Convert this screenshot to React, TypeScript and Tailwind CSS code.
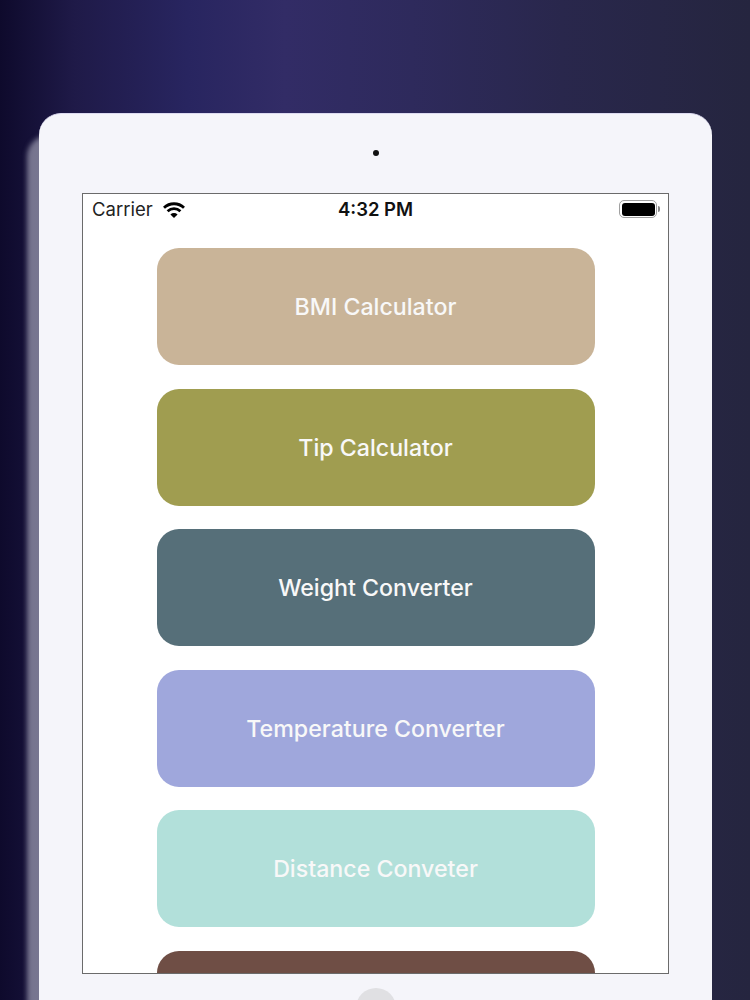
const tools = [
  { name: "BMI Calculator", color: "bg-[#c9b498]" },
  { name: "Tip Calculator", color: "bg-[#a09d50]" },
  { name: "Weight Converter", color: "bg-[#566f79]" },
  { name: "Temperature Converter", color: "bg-[#9fa7dc]" },
  { name: "Distance Conveter", color: "bg-[#b2e0da]" },
  { name: "", color: "bg-[#6f4e45]" },
];

const WifiIcon = () => (
  <svg width="22" height="16" viewBox="0 0 22 16" fill="none" stroke="#000" strokeWidth="2.8">
    <path d="M1 5.8C6.6 0.4 15.4 0.4 21 5.8" />
    <path d="M4.6 9.3C8.3 5.8 13.7 5.8 17.4 9.3" />
    <path d="M11 16L7.4 12.4C9.5 10.6 12.5 10.6 14.6 12.4Z" fill="#000" stroke="none" />
  </svg>
);

const BatteryIcon = () => (
  <div className="flex items-center gap-[1px]">
    <div className="w-[38px] h-[18px] rounded-[5px] border-[1.5px] border-[#a0a0a0] p-[1.5px]">
      <div className="w-full h-full rounded-[3px] bg-black" />
    </div>
    <div className="w-[2px] h-[6px] rounded-r-sm bg-[#8a8a8a]" />
  </div>
);

export default function App() {
  return (
    <div className="h-[1000px] overflow-hidden pt-[113px] pl-[39px] bg-[linear-gradient(90deg,#0e0a2c_0%,#1f1a48_10%,#282560_25%,#322c66_38%,#2e2a5c_55%,#29274c_75%,#25253f_100%)] font-['Inter','Liberation_Sans',sans-serif]">
      <div className="relative w-[673px] h-[960px] rounded-t-[22px] bg-[#f5f5fa] border-t border-[#dcdaf0] shadow-[-12px_22px_5px_rgba(200,200,215,0.55)]">
        <div className="flex justify-center pt-[36px]">
          <div className="w-[6px] h-[6px] rounded-full bg-[#111]" />
        </div>

        <div className="mx-[43px] mt-[37px] w-[587px] h-[781px] overflow-hidden border border-[#6b6b6b] bg-white">
          <div className="relative flex items-center justify-between h-[30px] pl-[9px] pr-[8px]">
            <div className="flex items-center gap-[10px] text-[18.5px] text-[#222] translate-y-[1px]">
              <span>Carrier</span>
              <WifiIcon />
            </div>
            <span className="absolute left-0 right-0 text-center text-[18.5px] font-semibold text-[#111] translate-y-[1px]">4:32 PM</span>
            <BatteryIcon />
          </div>

          <div className="flex flex-col items-center gap-[23.6px] pt-[24px]">
            {tools.map((tool, i) => (
              <button
                key={i}
                className={`w-[438px] h-[117px] shrink-0 rounded-[22px] text-[23.2px] font-medium text-[#f8f8f8] pt-[2px] ${tool.color}`}
              >
                {tool.name}
              </button>
            ))}
          </div>
        </div>

        <div className="flex justify-center mt-[14px]">
          <div className="w-[40px] h-[40px] rounded-full bg-[#e0e0e3]" />
        </div>
      </div>
    </div>
  );
}
